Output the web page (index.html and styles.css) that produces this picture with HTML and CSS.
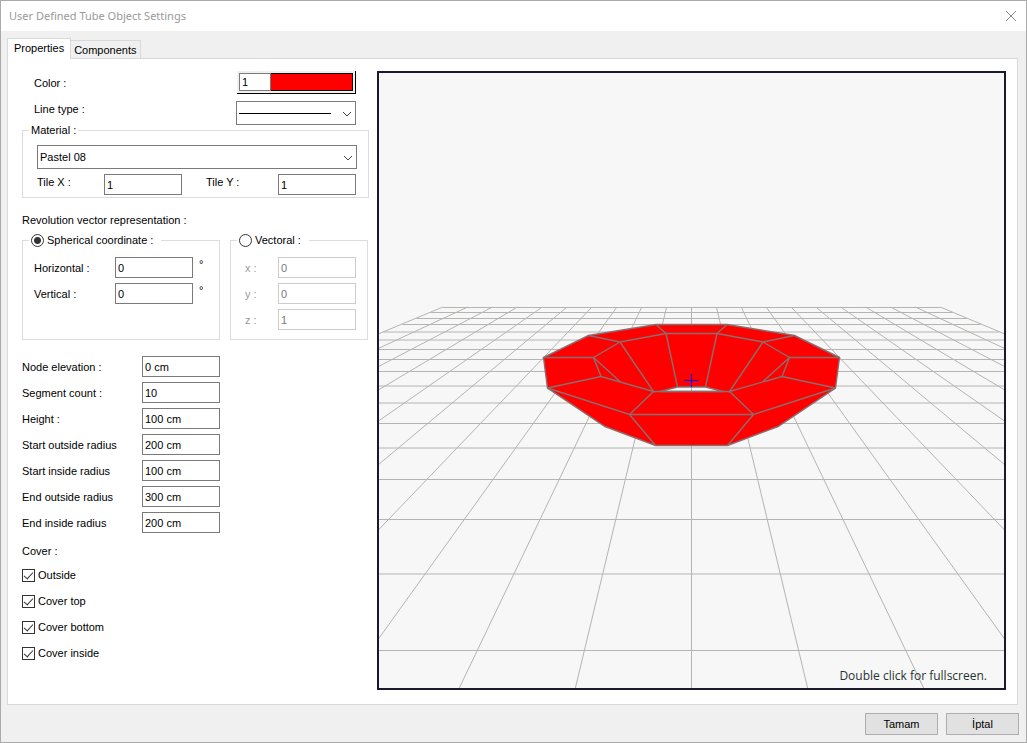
FILE: index.html
```html
<!DOCTYPE html>
<html lang="en">
<head>
  <meta charset="UTF-8">
  <title>User Defined Tube Object Settings</title>
  <link rel="stylesheet" href="styles.css">
</head>
<body>

  <form class="window">
    <header class="titlebar">
      <h1>User Defined Tube Object Settings</h1>
      <button type="button" class="close" aria-label="Close">
        <svg width="12" height="12" viewBox="0 0 12 12"><path d="M1 1l10 10M11 1L1 11"/></svg>
      </button>
    </header>

    <nav class="tabs">
      <button type="button" class="tab active">Properties</button>
      <button type="button" class="tab">Components</button>
    </nav>

    <main class="panel">
      <div class="settings">

        <div class="row color-row">
          <label for="color">Color :</label>
          <div class="color-box">
            <input type="text" id="color" value="1">
            <button type="button" class="swatch" aria-label="Pick color"></button>
          </div>
        </div>

        <div class="row line-row">
          <label for="lineType">Line type :</label>
          <div class="combo">
            <select id="lineType"><option></option></select>
            <span class="line-sample"></span>
            <svg class="arrow" width="10" height="6" viewBox="0 0 10 6"><path d="M1 1l4 4 4-4"/></svg>
          </div>
        </div>

        <fieldset class="material">
          <legend>Material :</legend>
          <div class="combo">
            <select id="material" aria-label="Material"><option>Pastel 08</option></select>
            <svg class="arrow" width="10" height="6" viewBox="0 0 10 6"><path d="M1 1l4 4 4-4"/></svg>
          </div>
          <div class="tiles">
            <label for="tileX">Tile X :</label>
            <input type="text" id="tileX" value="1">
            <label for="tileY">Tile Y :</label>
            <input type="text" id="tileY" value="1">
          </div>
        </fieldset>

        <p class="caption">Revolution vector representation :</p>

        <div class="vectors">
          <fieldset class="spherical">
            <legend><input type="radio" name="vector" id="spherical" checked><label for="spherical">Spherical coordinate :</label></legend>
            <div class="row">
              <label for="horizontal">Horizontal :</label>
              <input type="text" id="horizontal" value="0">
              <span class="degree">°</span>
            </div>
            <div class="row">
              <label for="vertical">Vertical :</label>
              <input type="text" id="vertical" value="0">
              <span class="degree">°</span>
            </div>
          </fieldset>

          <fieldset class="vectoral">
            <legend><input type="radio" name="vector" id="vectoral"><label for="vectoral">Vectoral :</label></legend>
            <div class="row off">
              <label for="vx">x :</label>
              <input type="text" id="vx" value="0" disabled>
            </div>
            <div class="row off">
              <label for="vy">y :</label>
              <input type="text" id="vy" value="0" disabled>
            </div>
            <div class="row off">
              <label for="vz">z :</label>
              <input type="text" id="vz" value="1" disabled>
            </div>
          </fieldset>
        </div>

        <div class="sizes">
          <div class="row"><label for="elevation">Node elevation :</label><input type="text" id="elevation" value="0 cm"></div>
          <div class="row"><label for="segments">Segment count :</label><input type="text" id="segments" value="10"></div>
          <div class="row"><label for="height">Height :</label><input type="text" id="height" value="100 cm"></div>
          <div class="row"><label for="startOut">Start outside radius</label><input type="text" id="startOut" value="200 cm"></div>
          <div class="row"><label for="startIn">Start inside radius</label><input type="text" id="startIn" value="100 cm"></div>
          <div class="row"><label for="endOut">End outside radius</label><input type="text" id="endOut" value="300 cm"></div>
          <div class="row"><label for="endIn">End inside radius</label><input type="text" id="endIn" value="200 cm"></div>
        </div>

        <p class="caption cover">Cover :</p>
        <div class="checks">
          <label><input type="checkbox" checked>Outside</label>
          <label><input type="checkbox" checked>Cover top</label>
          <label><input type="checkbox" checked>Cover bottom</label>
          <label><input type="checkbox" checked>Cover inside</label>
        </div>
      </div>

      <div class="preview">
        <!-- x = 0 is the middle of the view -->
        <svg class="scene" viewBox="-312.5 0 625 615" preserveAspectRatio="xMidYMin slice">
          <g class="grid">
            <path d="M-248.7 234.5H248.7M-261 239.5H261M-275 245.5H275M-289 251.5H289M-308 259H308M-313 267H313M-313 276.5H313M-313 286.5H313M-313 298.5H313M-313 313H313M-313 330H313M-313 350.5H313M-313 375H313M-313 406.5H313M-313 446.5H313M-313 501H313M-313 577.5H313"/>
            <path d="M0 234V620"/>
            <path id="fan" d="M24.9 234L116.1 615M49.7 234L232.2 615M74.6 234L348.3 615M99.5 234L464.4 615M124.4 234L580.5 615M149.2 234L696.6 615M174.1 234L812.7 615M199 234L928.8 615M223.8 234L1044.9 615M248.7 234L1161 615"/>
            <use href="#fan" transform="scale(-1 1)"/>
          </g>
          <g class="tube">
            <path class="body" fill-rule="evenodd" d="M-35.5 251.5H35.5L103 262.5 148 284.5 144 315 86.5 353.5 36 372.5H-36L-86.5 353.5-144 315-148 284.5-103 262.5ZM-32 318.5L-14 314H14L32 318.5Z"/>
            <path d="M-25.5 260.5H25.5M-38 318.5H38M-62 341.5H62M98 284.5H148M-98 284.5H-148"/>
            <path id="edges" d="M35.5 251.5L25.5 260.5 71.5 269 103 262.5M71.5 269L98 284.5L90.5 303.5M98 284.5L71.5 308.5M144 315L90.5 303.5 38 318.5 71.5 269M25.5 260.5L14 314M38 318.5L62 341.5 144 315M62 341.5L36 372.5"/>
            <use href="#edges" transform="scale(-1 1)"/>
          </g>
          <path class="cross" d="M-7 307.5H7M0 301V314"/>
        </svg>
        <span class="hint">Double click for fullscreen.</span>
      </div>
    </main>

    <footer class="actions">
      <button type="submit">Tamam</button>
      <button type="button">İptal</button>
    </footer>
  </form>

</body>
</html>
```
FILE: styles.css
```css
* {
  box-sizing: border-box;
}

body {
  margin: 0;
  background-color: #f0f0f0;
  color: #000;
}

body, button, input, select {
  font-family: "Liberation Sans", Arial, sans-serif;
  font-size: 11px;
  line-height: 14px;
}

.window {
  display: flex;
  flex-direction: column;
  min-height: 100vh;
  border: 1px solid #aaa;
}

.titlebar {
  display: flex;
  align-items: center;
  justify-content: space-between;
  height: 30px;
  padding: 0 9px 0 8px;
  background-color: #fff;
}

.titlebar h1 {
  margin: 0;
  font-family: "Noto Sans", sans-serif;
  font-size: 11px;
  font-weight: normal;
  color: #999;
}

.close {
  display: flex;
  padding: 0;
  border: none;
  background: none;
}

.close path {
  fill: none;
  stroke: #888;
}

.tabs {
  display: flex;
  align-items: flex-end;
  height: 27px;
  padding-left: 6px;
}

.tab {
  height: 18px;
  padding: 0 3px;
  border: 1px solid #d9d9d9;
  border-left: none;
  border-bottom: none;
  background-color: #f0f0f0;
}

.tab.active {
  position: relative;
  height: 21px;
  padding: 0 6px 2px;
  margin-bottom: -1px;
  border-left: 1px solid #d9d9d9;
  background-color: #fff;
}

.panel {
  flex: 1;
  display: flex;
  gap: 8px;
  margin: 0 8px 0 6px;
  padding: 12px 11px 14px 14px;
  border: 1px solid #d9d9d9;
  background-color: #fff;
}

.settings {
  width: 347px;
}

input[type="text"] {
  width: 78px;
  height: 21px;
  padding: 0 2px;
  border: 1px solid #7a7a7a;
  background-color: #fff;
}

input[type="text"]:disabled {
  border-color: #ccc;
  color: #777;
}

.row {
  display: flex;
  align-items: center;
}

.color-row,
.line-row {
  justify-content: space-between;
  padding: 0 13px 0 12px;
}

.color-box {
  display: flex;
  width: 119px;
  height: 23px;
  padding: 2px;
  border-right: 1px solid #000;
  border-bottom: 1px solid #000;
  background-color: #f0f0f0;
}

.color-box input[type="text"] {
  width: 32px;
  height: 18px;
}

.swatch {
  flex: 1;
  height: 18px;
  padding: 0;
  border: 1px solid #000;
  border-left: none;
  background-color: #f00;
}

.combo {
  position: relative;
  height: 24px;
}

.combo select {
  width: 100%;
  height: 24px;
  padding: 0 2px;
  border: 1px solid #7a7a7a;
  border-radius: 0;
  background-color: #fff;
  appearance: none;
}

.arrow {
  position: absolute;
  right: 4px;
  top: 10px;
  fill: none;
  stroke: #444;
}

.line-row {
  align-items: flex-start;
  margin-top: 7px;
}

.line-row label {
  padding-top: 1px;
}

.line-row .combo {
  width: 120px;
}

.line-sample {
  position: absolute;
  left: 3px;
  top: 12px;
  width: 92px;
  border-top: 1px solid #000;
}

fieldset {
  min-width: 0;
  margin: 0;
  border: 1px solid #dcdcdc;
}

legend {
  display: flex;
  align-items: center;
  height: 14px;
}

.material {
  margin-top: -2px;
  padding: 8px 11px 2px 14px;
}

.material legend {
  margin-left: -8px;
  padding: 0 2px;
}

.tiles {
  display: grid;
  grid-template-columns: 67px 78px 96px 78px;
  margin-top: 5px;
}

.tiles label {
  padding-top: 1px;
}

.tiles label + input + label {
  padding-left: 24px;
}

.caption {
  margin: 15px 0 6px;
}

.vectors {
  display: flex;
  gap: 10px;
}

.spherical {
  width: 198px;
  height: 107px;
  padding: 10px 0 0 11px;
}

.vectoral {
  width: 138px;
  height: 107px;
  padding: 10px 0 0 14px;
}

.vectors legend {
  padding-right: 8px;
}

.spherical legend {
  margin-left: -5px;
}

.vectoral legend {
  margin-left: -8px;
}

.vectors .row,
.sizes .row {
  margin-bottom: 5px;
}

.spherical .row label {
  width: 81px;
}

.vectoral .row label {
  width: 33px;
}

.off {
  color: #999;
}

.degree {
  align-self: flex-start;
  margin-left: 6px;
}

input[type="radio"],
input[type="checkbox"] {
  appearance: none;
  flex: none;
  width: 13px;
  height: 13px;
  margin: 0 3px 0 0;
  border: 1px solid #333;
  background-color: #fff;
}

input[type="radio"] {
  border-radius: 50%;
}

input[type="radio"]:checked {
  background-image: radial-gradient(circle, #333 3px, #fff 4px);
}

input[type="checkbox"] {
  position: relative;
}

/* tick mark */
input[type="checkbox"]:checked::after {
  content: "";
  position: absolute;
  left: 3px;
  top: 0;
  width: 4px;
  height: 8px;
  border: solid #333;
  border-width: 0 1px 1px 0;
  transform: rotate(42deg);
}

.sizes {
  margin-top: 16px;
}

.sizes label {
  width: 120px;
}

.cover {
  margin: 11px 0 10px;
}

.checks label {
  display: flex;
  align-items: center;
  height: 14px;
  margin-bottom: 12px;
}

.preview {
  position: relative;
  flex: 1;
  border: 2px solid #1a1a2e;
  background-color: #f7f7f7;
}

.scene {
  position: absolute;
  width: 100%;
  height: 100%;
}

.grid {
  fill: none;
  stroke: #b4b4b2;
}

.tube {
  fill: none;
  stroke: #8a6e6e;
  stroke-width: 1.4;
}

.tube .body {
  fill: #f00;
}

.cross {
  stroke: #00f;
}

.hint {
  position: absolute;
  right: 17px;
  bottom: 5px;
  font-family: "Open Sans", sans-serif;
  font-size: 12px;
  color: #1f3333;
}

.actions {
  display: flex;
  justify-content: flex-end;
  gap: 8px;
  padding: 8px 7px 7px;
}

.actions button {
  width: 73px;
  height: 22px;
  padding: 0;
  border: 1px solid #adadad;
  background-color: #e1e1e1;
}
```
